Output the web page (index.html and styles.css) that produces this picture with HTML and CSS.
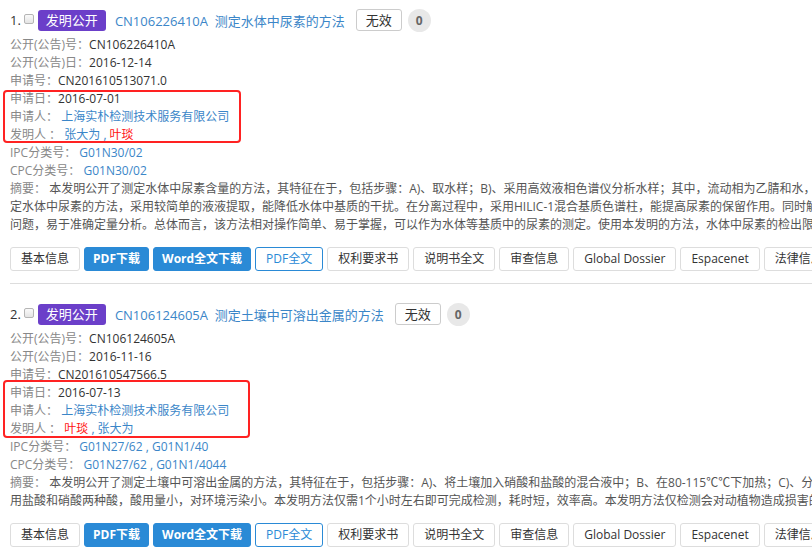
FILE: index.html
```html
<!DOCTYPE html>
<html lang="zh-CN">
<head>
  <meta charset="utf-8">
  <title>专利检索结果</title>
  <link rel="stylesheet" href="styles.css">
</head>
<body>
  <div class="results">

    <!-- 第一条 -->
    <div class="item">
      <div class="item-head">
        <span class="num">1.</span>
        <input type="checkbox" class="pick">
        <span class="badge">发明公开</span>
        <a class="title" href="#">CN106226410A&nbsp; 测定水体中尿素的方法</a>
        <span class="status">无效</span>
        <span class="count">0</span>
      </div>
      <div class="info">
        <div class="row"><span class="label">公开(公告)号：</span>CN106226410A</div>
        <div class="row"><span class="label">公开(公告)日：</span>2016-12-14</div>
        <div class="row"><span class="label">申请号：</span>CN201610513071.0</div>
        <div class="mark mark-a">
          <div class="row"><span class="label">申请日：</span>2016-07-01</div>
          <div class="row"><span class="label">申请人：</span> <a href="#">上海实朴检测技术服务有限公司</a></div>
          <div class="row"><span class="label">发明人 ：</span> <a href="#">张大为</a><span class="sep"> , </span><a href="#" class="hl">叶琰</a></div>
        </div>
        <div class="row"><span class="label">IPC分类号：</span> <a href="#">G01N30/02</a></div>
        <div class="row"><span class="label">CPC分类号：</span> <a href="#">G01N30/02</a></div>
        <p class="abstract"><span class="label">摘要：</span> 本发明公开了测定水体中尿素含量的方法，其特征在于，包括步骤：A)、取水样；B)、采用高效液相色谱仪分析水样；其中，流动相为乙腈和水，乙腈与水的体积比为80:20；C)、计算。本发明提供的测<br>定水体中尿素的方法，采用较简单的液液提取，能降低水体中基质的干扰。在分离过程中，采用HILIC-1混合基质色谱柱，能提高尿素的保留作用。同时解决了尿素在常规色谱柱上保留弱的<br>问题，易于准确定量分析。总体而言，该方法相对操作简单、易于掌握，可以作为水体等基质中的尿素的测定。使用本发明的方法，水体中尿素的检出限为0.05mg/L。</p>
      </div>
      <div class="actions">
        <a class="btn" href="#">基本信息</a>
        <a class="btn btn-solid" href="#">PDF下载</a>
        <a class="btn btn-solid" href="#">Word全文下载</a>
        <a class="btn btn-line" href="#">PDF全文</a>
        <a class="btn" href="#">权利要求书</a>
        <a class="btn" href="#">说明书全文</a>
        <a class="btn" href="#">审查信息</a>
        <a class="btn" href="#">Global Dossier</a>
        <a class="btn" href="#">Espacenet</a>
        <a class="btn" href="#">法律信息</a>
        <a class="btn" href="#">同族专利</a>
      </div>
    </div>

    <!-- 第二条 -->
    <div class="item">
      <div class="item-head">
        <span class="num">2.</span>
        <input type="checkbox" class="pick">
        <span class="badge">发明公开</span>
        <a class="title" href="#">CN106124605A&nbsp; 测定土壤中可溶出金属的方法</a>
        <span class="status">无效</span>
        <span class="count">0</span>
      </div>
      <div class="info">
        <div class="row"><span class="label">公开(公告)号：</span>CN106124605A</div>
        <div class="row"><span class="label">公开(公告)日：</span>2016-11-16</div>
        <div class="row"><span class="label">申请号：</span>CN201610547566.5</div>
        <div class="mark mark-b">
          <div class="row"><span class="label">申请日：</span>2016-07-13</div>
          <div class="row"><span class="label">申请人：</span> <a href="#">上海实朴检测技术服务有限公司</a></div>
          <div class="row"><span class="label">发明人 ：</span> <a href="#" class="hl">叶琰</a><span class="sep"> , </span><a href="#">张大为</a></div>
        </div>
        <div class="row"><span class="label">IPC分类号：</span> <a href="#">G01N27/62</a><span class="sep"> , </span><a href="#">G01N1/40</a></div>
        <div class="row"><span class="label">CPC分类号：</span> <a href="#">G01N27/62</a><span class="sep"> , </span><a href="#">G01N1/4044</a></div>
        <p class="abstract"><span class="label">摘要：</span> 本发明公开了测定土壤中可溶出金属的方法，其特征在于，包括步骤：A)、将土壤加入硝酸和盐酸的混合液中；B、在80-115℃℃下加热；C)、分离后检测溶出液中的金属含量。本发明方法只采<br>用盐酸和硝酸两种酸，酸用量小，对环境污染小。本发明方法仅需1个小时左右即可完成检测，耗时短，效率高。本发明方法仅检测会对动植物造成损害的可溶出金属含量。</p>
      </div>
      <div class="actions">
        <a class="btn" href="#">基本信息</a>
        <a class="btn btn-solid" href="#">PDF下载</a>
        <a class="btn btn-solid" href="#">Word全文下载</a>
        <a class="btn btn-line" href="#">PDF全文</a>
        <a class="btn" href="#">权利要求书</a>
        <a class="btn" href="#">说明书全文</a>
        <a class="btn" href="#">审查信息</a>
        <a class="btn" href="#">Global Dossier</a>
        <a class="btn" href="#">Espacenet</a>
        <a class="btn" href="#">法律信息</a>
        <a class="btn" href="#">同族专利</a>
      </div>
    </div>

  </div>
</body>
</html>
```

FILE: styles.css
```css
/* 检索结果列表 */
body {
  margin: 0;
  background: #fff;
  color: #333;
  font-family: "Open Sans", "Noto Sans CJK SC", sans-serif;
  font-size: 12px;
  overflow: hidden;
}
a {
  color: #3b86c8;
  text-decoration: none;
}
.results {
  width: 1200px;
  padding-left: 10px;
}
.item {
  padding: 18px 0 12px;
  border-bottom: 1px solid #ddd;
}
.item:first-child {
  padding-top: 8px;
}

/* 标题行 */
.item-head {
  display: flex;
  align-items: center;
  height: 24px;
  font-size: 13px;
}
.num {
  color: #333;
}
.pick {
  -webkit-appearance: none;
  appearance: none;
  width: 10px;
  height: 10px;
  margin: 0 4px 3px 3px;
  border: 1px solid #b5b5b5;
  border-radius: 2px;
  background: linear-gradient(#fafafa, #e4e4e4);
  box-sizing: border-box;
}
.badge {
  height: 21px;
  line-height: 21px;
  padding: 0 8px;
  border-radius: 3px;
  background: #6b3fc9;
  color: #fff;
}
.title {
  margin-left: 9px;
}
.status {
  margin-left: 11px;
  height: 22px;
  line-height: 20px;
  padding: 0 9px;
  border: 1px solid #ccc;
  border-radius: 3px;
  box-sizing: border-box;
  color: #333;
}
.count {
  margin-left: 6px;
  width: 23px;
  height: 23px;
  line-height: 23px;
  border-radius: 50%;
  background: #e8e8e8;
  color: #666;
  font-size: 12px;
  font-weight: bold;
  text-align: center;
}

/* 著录项目 */
.info {
  margin-top: 4px;
}
.row {
  line-height: 18px;
  white-space: nowrap;
}
.label {
  color: #888;
}
.sep {
  color: #3b86c8;
}
.hl {
  color: #f11;
}
.abstract {
  margin: 0;
  line-height: 18px;
  color: #555;
  white-space: nowrap;
}

/* 红框标注 */
.mark {
  position: relative;
}
.mark::after {
  content: "";
  position: absolute;
  left: -7px;
  border: 2px solid #f22;
  border-radius: 4px;
  box-sizing: border-box;
}
.mark-a::after {
  top: 0;
  width: 238px;
  height: 53px;
}
.mark-b::after {
  top: -4px;
  width: 247px;
  height: 58px;
}

/* 操作按钮 */
.actions {
  display: flex;
  gap: 4px;
  margin-top: 13px;
}
.btn {
  height: 24px;
  line-height: 22px;
  padding: 0 10px;
  border: 1px solid #ddd;
  border-radius: 3px;
  box-sizing: border-box;
  background: #fff;
  color: #333;
  white-space: nowrap;
}
.btn-solid {
  padding: 0 8px;
  background: #2a8ad6;
  border-color: #2a8ad6;
  color: #fff;
  font-weight: bold;
}
.btn-line {
  border-color: #2a8ad6;
  color: #2a8ad6;
}
```
